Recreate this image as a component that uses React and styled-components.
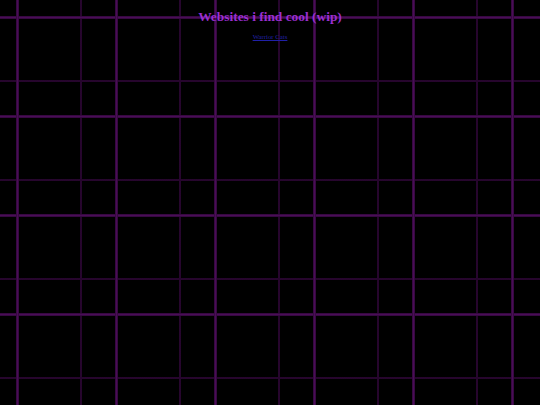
import React from 'react';
import styled, { createGlobalStyle } from 'styled-components';

const Global = createGlobalStyle`
  html, body {
    margin: 0;
    padding: 0;
    background: #000;
  }
  body {
    font-family: "Liberation Serif", "Times New Roman", serif;
  }
`

// two offset grids, both with a 99px period
const Page = styled.div`
  width: 540px;
  height: 405px;
  overflow: hidden;
  background-color: #000;
  background-image:
    linear-gradient(to right, transparent 16px, #24052c 16px, #4a0d57 17px, #4a0d57 18px, #24052c 19px, transparent 19px),
    linear-gradient(to bottom, transparent 16px, #24052c 16px, #4a0d57 17px, #4a0d57 18px, #24052c 19px, transparent 19px),
    linear-gradient(to right, transparent 80px, #1e0424 80px, #2f0737 81px, #1e0424 82px, transparent 82px),
    linear-gradient(to bottom, transparent 80px, #1e0424 80px, #2f0737 81px, #1e0424 82px, transparent 82px);
  background-size: 99px 99px;
  text-align: center;
  padding-top: 9px;
  box-sizing: border-box;
`

const Title = styled.h1`
  margin: 0;
  font-size: 13.4px;
  font-weight: bold;
  color: #9a2fd0;
  line-height: 16px;
`

const Links = styled.div`
  margin-top: 8px;
  font-size: 6.8px;
  line-height: 8px;
`

const Link = styled.a`
  color: #2020a8;
  text-decoration: underline;
`

export default function App() {
  return (
    <>
      <Global />
      <Page>
        <Title>Websites i find cool (wip)</Title>
        <Links>
          <Link href="#">Warrior Cats</Link>
        </Links>
      </Page>
    </>
  );
}
